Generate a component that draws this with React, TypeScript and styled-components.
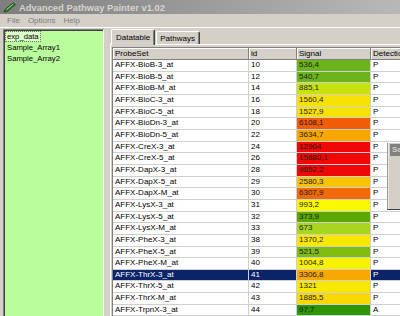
import * as React from 'react';
import styled, {createGlobalStyle} from 'styled-components';

const GlobalStyle = createGlobalStyle`
  * { box-sizing: border-box; }
  html, body { margin: 0; padding: 0; background: #d4d0c8; }
  body { font-family: "Liberation Sans", Arial, sans-serif; }
`;

const Window = styled.div`
  width: 400px;
  height: 316px;
  display: flex;
  flex-direction: column;
  overflow: hidden;
  position: relative;
  background: #d4d0c8;
  font-family: "Liberation Sans", Arial, sans-serif;
`;

const TitleBar = styled.div`
  height: 14px;
  flex: none;
  display: flex;
  align-items: center;
  gap: 3px;
  padding-left: 3px;
  background: linear-gradient(to right, #7e7e7e, #b8b8b8);
`;

const TitleText = styled.span`
  font-weight: bold;
  font-size: 9.4px;
  color: #d8d4cc;
  white-space: nowrap;
`;

const MenuBar = styled.div`
  height: 14px;
  flex: none;
  display: flex;
  align-items: center;
  padding-left: 3px;
  border-bottom: 1px solid #ffffff;
`;

const MenuItem = styled.span`
  font-size: 8px;
  color: #7c7c7c;
  padding: 0 4px;
`;

const Client = styled.div`
  flex: 1;
  min-height: 0;
  display: flex;
  gap: 6px;
  padding: 1px 0 0 3px;
`;

const ListBox = styled.div`
  width: 101px;
  flex: none;
  background: #b9fd9c;
  border-top: 1px solid #808080;
  border-left: 1px solid #808080;
  border-right: 1px solid #ffffff;
  box-shadow: inset 1px 1px 0 #404040;
  padding: 1px 0 0 1px;
`;

const ListItem = styled.div<{$focused?: boolean}>`
  height: 11px;
  line-height: 11px;
  font-size: 7.7px;
  color: #000;
  padding-left: 1px;
  span {
    outline: ${p => (p.$focused ? '1px dotted #6a7a60' : 'none')};
    background: ${p => (p.$focused ? '#dcffcc' : 'transparent')};
    padding: 0 1px;
  }
`;

const TabControl = styled.div`
  flex: 1;
  min-width: 0;
  display: flex;
  flex-direction: column;
`;

const TabStrip = styled.div`
  height: 15px;
  flex: none;
  display: flex;
  align-items: flex-end;
  padding-left: 1px;
  position: relative;
  z-index: 1;
`;

const Tab = styled.div<{$active?: boolean}>`
  height: ${p => (p.$active ? '16px' : '13px')};
  margin-bottom: ${p => (p.$active ? '-1px' : '0')};
  margin-right: ${p => (p.$active ? '1px' : '0')};
  padding: ${p => (p.$active ? '3px 4px 0 4px' : '2px 4px 0 3px')};
  background: #d4d0c8;
  border-top: 1px solid #ffffff;
  border-left: 1px solid #ffffff;
  border-right: 1px solid #404040;
  box-shadow: inset -1px 0 0 #808080;
  border-radius: 2px 2px 0 0;
  font-size: 8px;
  color: #000;
  white-space: nowrap;
`;

const TabPanel = styled.div`
  flex: 1;
  min-height: 0;
  overflow: hidden;
  border-top: 1px solid #ffffff;
  border-left: 1px solid #ffffff;
  padding: 2px 0 0 1px;
`;

const Grid = styled.div`
  display: grid;
  grid-template-columns: 136px 48px 74px 80px;
  grid-template-rows: 12px;
  grid-auto-rows: 11.67px;
  background: #ffffff;
  border-top: 1px solid #808080;
  border-left: 1px solid #808080;
`;

const HeaderCell = styled.div`
  background: #d4d0c8;
  box-shadow: inset 1px 1px 0 #ffffff;
  border-right: 1px solid #808080;
  border-bottom: 1px solid #808080;
  font-size: 8px;
  line-height: 11px;
  padding-left: 2px;
  white-space: nowrap;
  overflow: hidden;
  color: #000;
`;

const Cell = styled.div<{$bg?: string; $selected?: boolean}>`
  background: ${p => p.$bg || (p.$selected ? '#0a246a' : '#ffffff')};
  color: ${p => (p.$selected && !p.$bg ? '#ffffff' : p.$bg ? '#1e1a10' : '#000')};
  border-right: 1px solid #cfcfcf;
  border-bottom: 1px solid #cfcfcf;
  font-size: 8px;
  line-height: 10.6px;
  padding-left: 2px;
  white-space: nowrap;
  overflow: hidden;
`;

const FloatWindow = styled.div`
  position: absolute;
  left: 387px;
  top: 143px;
  width: 30px;
  height: 67px;
  background: #d4d0c8;
  border-left: 1px solid #9a9a9a;
  border-bottom: 1px solid #404040;
  box-shadow: inset 1px 0 0 #e8e8e8;
`;

const FloatTitle = styled.div`
  height: 12px;
  margin: 1px 0 0 2px;
  background: #808080;
  color: #d4d0c8;
  font-weight: bold;
  font-size: 8px;
  line-height: 12px;
  padding-left: 2px;
`;

type Row = [string, string, string, string, string];

const rows: Row[] = [
  ['AFFX-BioB-3_at', '10', '536,4', '#6cb41e', 'P'],
  ['AFFX-BioB-5_at', '12', '540,7', '#6cb41e', 'P'],
  ['AFFX-BioB-M_at', '14', '885,1', '#c8e20e', 'P'],
  ['AFFX-BioC-3_at', '16', '1560,4', '#f6e200', 'P'],
  ['AFFX-BioC-5_at', '18', '1527,9', '#f6e200', 'P'],
  ['AFFX-BioDn-3_at', '20', '6108,1', '#f05c08', 'P'],
  ['AFFX-BioDn-5_at', '22', '3634,7', '#f8a600', 'P'],
  ['AFFX-CreX-3_at', '24', '12904', '#f00808', 'P'],
  ['AFFX-CreX-5_at', '26', '15880,1', '#f00808', 'P'],
  ['AFFX-DapX-3_at', '28', '9852,2', '#f00808', 'P'],
  ['AFFX-DapX-5_at', '29', '2580,3', '#f8c400', 'P'],
  ['AFFX-DapX-M_at', '30', '6307,9', '#f06a0c', 'P'],
  ['AFFX-LysX-3_at', '31', '993,2', '#f8f800', 'P'],
  ['AFFX-LysX-5_at', '32', '373,9', '#5ca802', 'P'],
  ['AFFX-LysX-M_at', '33', '673', '#a8d620', 'P'],
  ['AFFX-PheX-3_at', '38', '1370,2', '#f8e800', 'P'],
  ['AFFX-PheX-5_at', '39', '521,5', '#7ebc12', 'P'],
  ['AFFX-PheX-M_at', '40', '1004,8', '#f8f200', 'P'],
  ['AFFX-ThrX-3_at', '41', '3306,8', '#f8a800', 'P'],
  ['AFFX-ThrX-5_at', '42', '1321', '#f8e800', 'P'],
  ['AFFX-ThrX-M_at', '43', '1885,5', '#f8d800', 'P'],
  ['AFFX-TrpnX-3_at', '44', '97,7', '#2e9600', 'A'],
];

const SELECTED = 18;

const AppIcon = () => (
  <svg width="13" height="11" viewBox="0 0 13 11">
    <path d="M1 10 L2.5 7 L10 1 L12.3 2.5 L4.5 9.2 Z" fill="#2f8a2a" stroke="#173a14" strokeWidth="0.8" />
    <path d="M3.5 7.5 L10.3 2" stroke="#9be38a" strokeWidth="0.9" />
  </svg>
);

export default function App() {
  return (
    <Window>
      <GlobalStyle />
      <TitleBar>
        <AppIcon />
        <TitleText>Advanced Pathway Painter v1.02</TitleText>
      </TitleBar>
      <MenuBar>
        <MenuItem>File</MenuItem>
        <MenuItem>Options</MenuItem>
        <MenuItem>Help</MenuItem>
      </MenuBar>
      <Client>
        <ListBox>
          <ListItem $focused><span>exp_data</span></ListItem>
          <ListItem><span>Sample_Array1</span></ListItem>
          <ListItem><span>Sample_Array2</span></ListItem>
        </ListBox>
        <TabControl>
          <TabStrip>
            <Tab $active>Datatable</Tab>
            <Tab>Pathways</Tab>
          </TabStrip>
          <TabPanel>
            <Grid>
              <HeaderCell>ProbeSet</HeaderCell>
              <HeaderCell>id</HeaderCell>
              <HeaderCell>Signal</HeaderCell>
              <HeaderCell>Detection</HeaderCell>
              {rows.map((r, i) => {
                const sel = i === SELECTED;
                return (
                  <React.Fragment key={r[0]}>
                    <Cell $selected={sel}>{r[0]}</Cell>
                    <Cell $selected={sel}>{r[1]}</Cell>
                    <Cell $bg={r[3]}>{r[2]}</Cell>
                    <Cell $selected={sel}>{r[4]}</Cell>
                  </React.Fragment>
                );
              })}
            </Grid>
          </TabPanel>
        </TabControl>
      </Client>
      <FloatWindow>
        <FloatTitle>Se</FloatTitle>
      </FloatWindow>
    </Window>
  );
}
